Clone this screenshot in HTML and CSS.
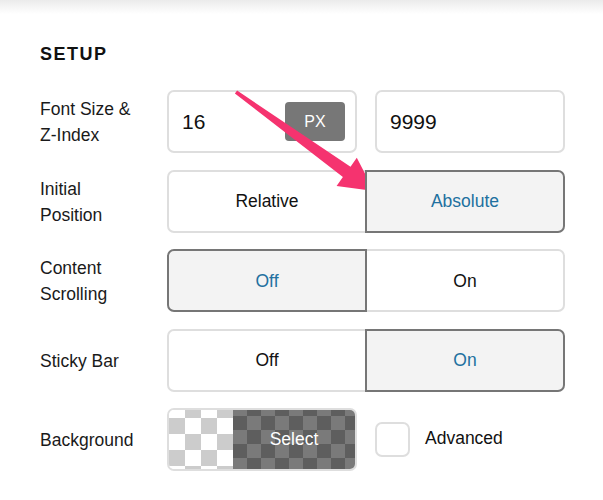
FILE: index.html
```html
<!DOCTYPE html>
<html>
<head>
<meta charset="utf-8">
<link rel="stylesheet" href="styles.css">
</head>
<body>
<div class="topshade"></div>
<main class="panel">
  <h2 class="title">SETUP</h2>
  <div class="setup">
    <div class="label">Font Size &amp;<br>Z-Index</div>
    <div class="pair">
      <div class="field"><span class="val">16</span><span class="unit">PX</span></div>
      <div class="field"><span class="val">9999</span></div>
    </div>

    <div class="label">Initial<br>Position</div>
    <div class="seg">
      <div class="opt">Relative</div>
      <div class="opt on">Absolute</div>
    </div>

    <div class="label">Content<br>Scrolling</div>
    <div class="seg">
      <div class="opt on">Off</div>
      <div class="opt">On</div>
    </div>

    <div class="label">Sticky Bar</div>
    <div class="seg">
      <div class="opt">Off</div>
      <div class="opt on">On</div>
    </div>

    <div class="label">Background</div>
    <div class="pair">
      <div class="swatch"><div class="light"></div><div class="dark">Select</div></div>
      <div class="check"><span class="box"></span><span class="checklabel">Advanced</span></div>
    </div>
  </div>
</main>
<svg class="arrow" width="603" height="500" viewBox="0 0 603 500">
  <polygon fill="#f5336f" points="234.9,93.4 237.1,90.6 350.5,166.8 356.8,157.7 374,191 336.6,186.1 342.9,177.0"/>
</svg>
</body>
</html>
```
FILE: styles.css
```css
html, body {
  margin: 0;
  padding: 0;
  background: #fff;
}
body {
  position: relative;
  width: 603px;
  height: 500px;
  overflow: hidden;
  font-family: "Liberation Sans", Arial, sans-serif;
  color: #111;
}
.topshade {
  height: 14px;
  background: linear-gradient(#ebebeb, #ffffff);
}
.panel {
  padding: 29px 38px 0 40px;
}
.title {
  margin: 0;
  font-size: 18px;
  line-height: 22px;
  font-weight: bold;
  letter-spacing: 1.5px;
  color: #111;
}
.setup {
  margin-top: 25px;
  display: grid;
  grid-template-columns: 127px 398px;
  grid-auto-rows: 63px;
  row-gap: 16.5px;
}
.label {
  display: flex;
  align-items: center;
  font-size: 17.5px;
  line-height: 26px;
  color: #1a1a1a;
  padding-top: 1px;
}
.pair {
  display: grid;
  grid-template-columns: 190px 1fr;
  column-gap: 18px;
}
.field {
  box-sizing: border-box;
  border: 2px solid #dedede;
  border-radius: 7px;
  display: flex;
  align-items: center;
  justify-content: space-between;
  padding: 0 10px 0 13px;
}
.val {
  font-size: 21px;
  color: #111;
}
.unit {
  width: 60px;
  height: 39px;
  border-radius: 4px;
  background: #777;
  color: #fff;
  font-size: 16px;
  display: flex;
  align-items: center;
  justify-content: center;
}
.seg {
  display: flex;
}
.opt {
  position: relative;
  flex: 1;
  box-sizing: border-box;
  border: 2px solid #dedede;
  display: flex;
  align-items: center;
  justify-content: center;
  font-size: 17.5px;
  color: #111;
  background: #fff;
  padding-top: 1px;
}
.opt + .opt {
  margin-left: -2px;
}
.opt:first-child {
  border-radius: 7px 0 0 7px;
}
.opt:last-child {
  border-radius: 0 7px 7px 0;
}
.opt.on {
  z-index: 1;
  background: #f3f3f3;
  border-color: #767676;
  color: #21709f;
}
.swatch {
  box-sizing: border-box;
  border: 2px solid #dedede;
  border-radius: 7px;
  overflow: hidden;
  display: flex;
}
.light {
  width: 64px;
  background: repeating-conic-gradient(#cccccc 0 25%, #ffffff 0 50%) 0 -8px / 32px 32px;
}
.dark {
  flex: 1;
  display: flex;
  align-items: center;
  justify-content: center;
  color: #fff;
  font-size: 17.5px;
  background: repeating-conic-gradient(#5e5e5e 0 25%, #7a7a7a 0 50%) 0 -8px / 28px 28px;
}
.check {
  display: flex;
  align-items: center;
  gap: 15px;
}
.box {
  box-sizing: border-box;
  width: 35px;
  height: 35px;
  border: 2px solid #dedede;
  border-radius: 7px;
  background: #fff;
}
.checklabel {
  font-size: 17.5px;
  color: #111;
  margin-top: -2px;
}
.arrow {
  position: absolute;
  left: 0;
  top: 0;
  pointer-events: none;
}
```
